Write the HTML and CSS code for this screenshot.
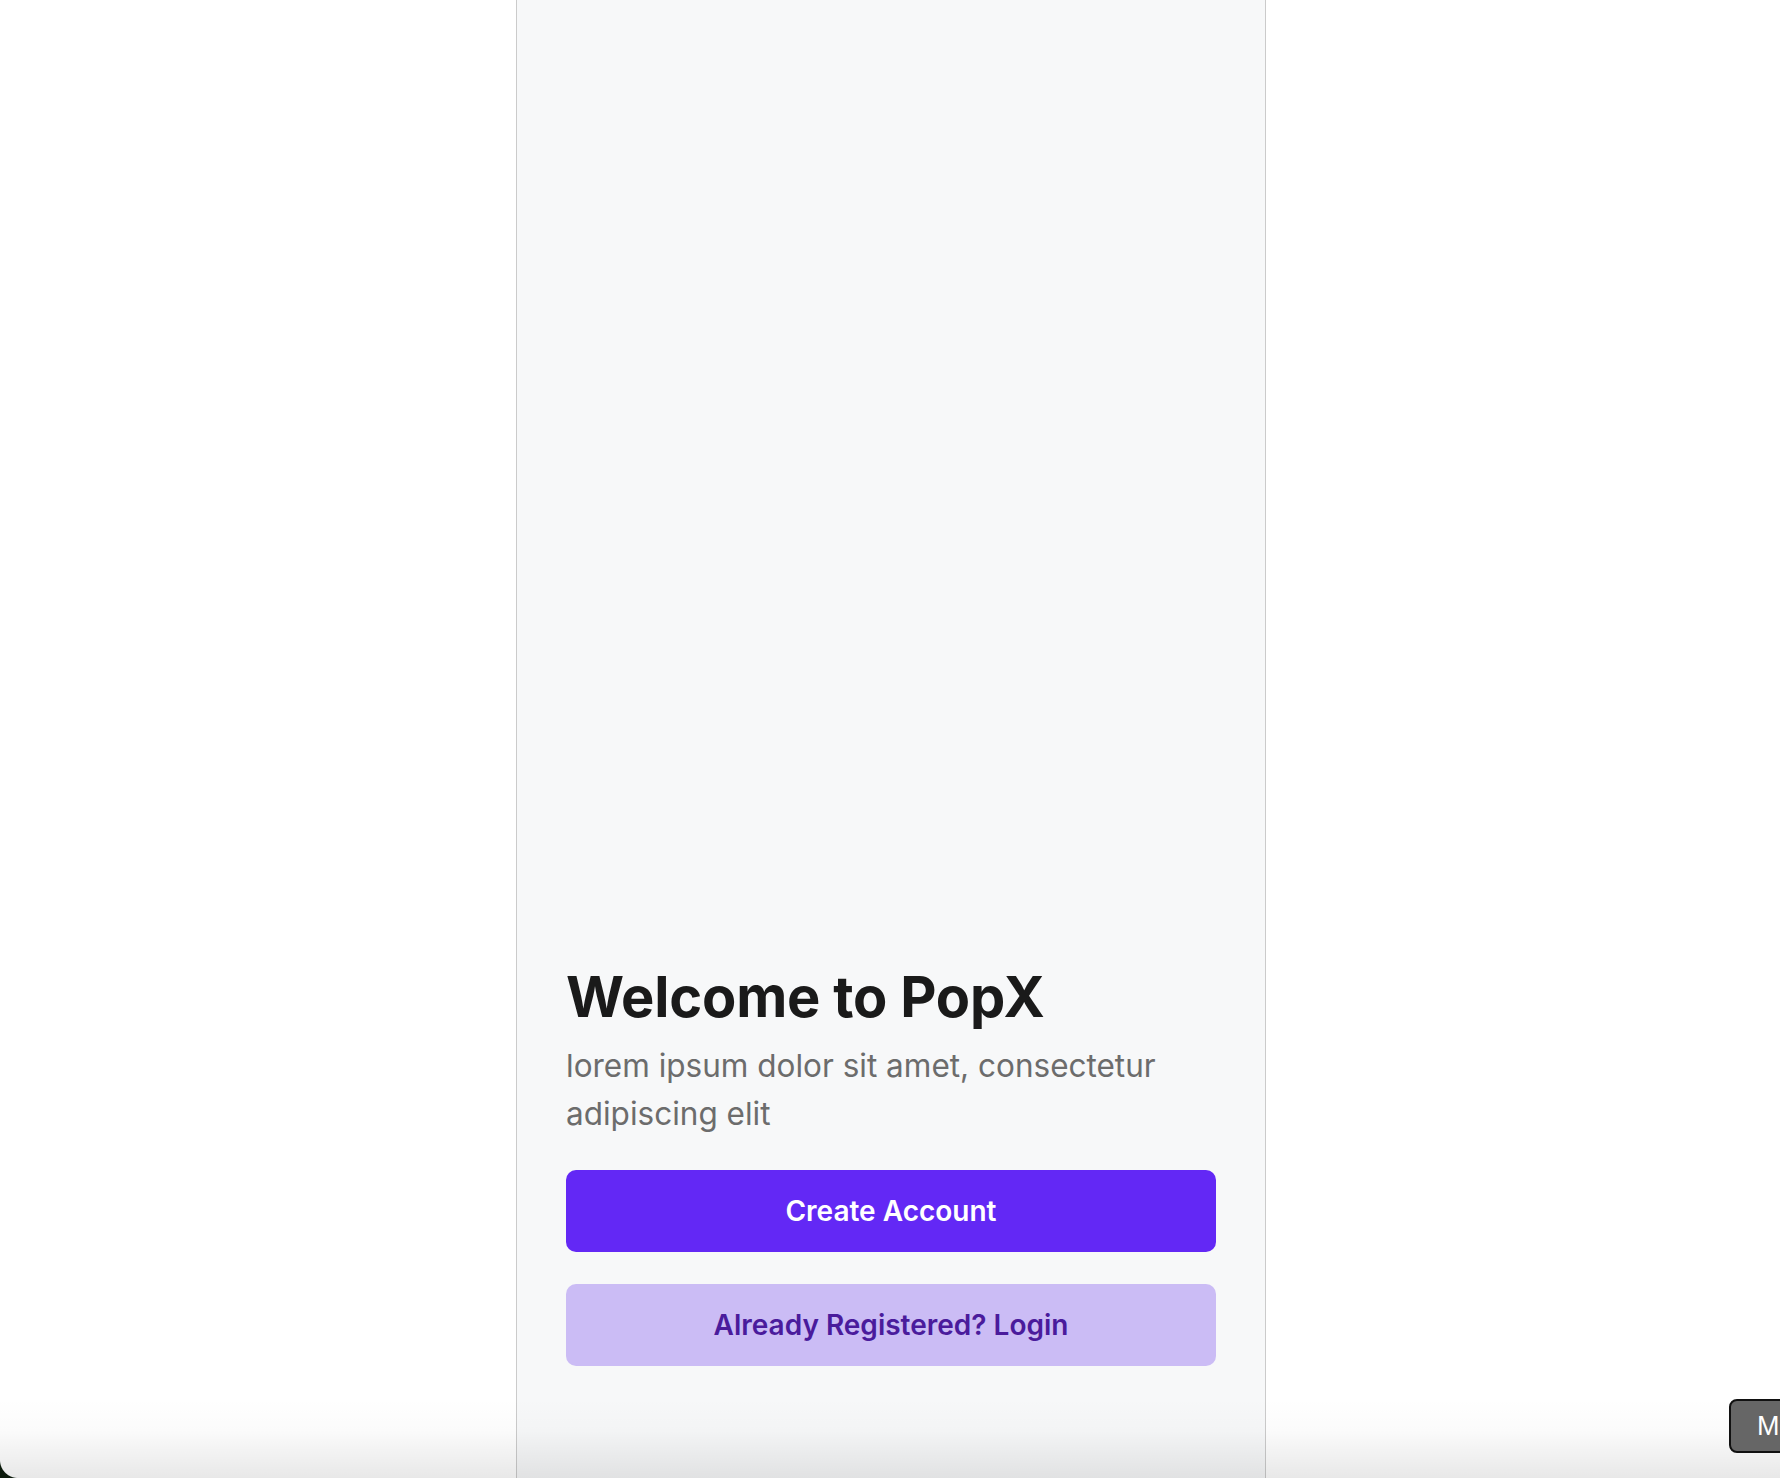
FILE: index.html
```html
<!DOCTYPE html>
<html lang="en">
<head>
<meta charset="utf-8">
<title>PopX</title>
<link rel="stylesheet" href="styles.css">
</head>
<body>
<div class="screen">
  <main class="panel">
    <section class="intro">
      <h1 class="title">Welcome to PopX</h1>
      <p class="subtitle">lorem ipsum dolor sit amet, consectetur adipiscing elit</p>
    </section>
    <div class="actions">
      <button class="btn btn-primary">Create Account</button>
      <button class="btn btn-secondary">Already Registered? Login</button>
    </div>
  </main>
  <div class="bottom-shade"></div>
  <div class="corner"></div>
  <div class="m-badge">M</div>
</div>
</body>
</html>
```
FILE: styles.css
```css
html, body {
  margin: 0;
  padding: 0;
  height: 100%;
  background: #ffffff;
}
body {
  font-family: Inter, "Noto Sans", sans-serif;
  overflow: hidden;
}
.screen {
  position: relative;
  height: 1478px;
  display: flex;
  justify-content: center;
  background: #ffffff;
  overflow: hidden;
}
.panel {
  box-sizing: border-box;
  width: 750px;
  margin-left: 2px;
  height: 100%;
  background: #f7f8f9;
  border-left: 1px solid #cbcbcb;
  border-right: 1px solid #cbcbcb;
  display: flex;
  flex-direction: column;
  justify-content: flex-end;
  padding: 0 49px 112px 49px;
}
.title {
  margin: 0;
  font-size: 56px;
  line-height: 67px;
  font-weight: 700;
  color: #1a1a1a;
  letter-spacing: -0.2px;
}
.subtitle {
  margin: 11px 0 0 0;
  font-size: 31.5px;
  line-height: 48px;
  font-weight: 400;
  color: #6c6c6c;
}
.actions {
  margin-top: 32px;
  display: flex;
  flex-direction: column;
  gap: 32px;
}
.btn {
  height: 82px;
  border: none;
  border-radius: 10px;
  font-family: Inter, "Noto Sans", sans-serif;
  font-size: 28px;
  font-weight: 600;
  cursor: pointer;
}
.btn-primary {
  background: #6328f5;
  color: #ffffff;
}
.btn-secondary {
  background: #cbbcf5;
  color: #4a1b9c;
}
.bottom-shade {
  position: absolute;
  left: 0;
  right: 0;
  bottom: 0;
  height: 80px;
  background: linear-gradient(to bottom, rgba(0,0,0,0) 0%, rgba(0,0,0,0.015) 40%, rgba(0,0,0,0.09) 100%);
  pointer-events: none;
}
.corner {
  position: absolute;
  left: 0;
  bottom: 0;
  width: 18px;
  height: 18px;
  background: radial-gradient(circle at 100% 0%, transparent 17.5px, #0b1a0b 18.5px);
  pointer-events: none;
}
.m-badge {
  position: absolute;
  left: 1729px;
  top: 1399px;
  width: 80px;
  height: 54px;
  box-sizing: border-box;
  border: 2px solid #111111;
  border-radius: 8px;
  background: #666666;
  color: #ffffff;
  font-family: "Liberation Sans", Arial, sans-serif;
  font-size: 27px;
  line-height: 50px;
  padding-left: 26px;
}
```
